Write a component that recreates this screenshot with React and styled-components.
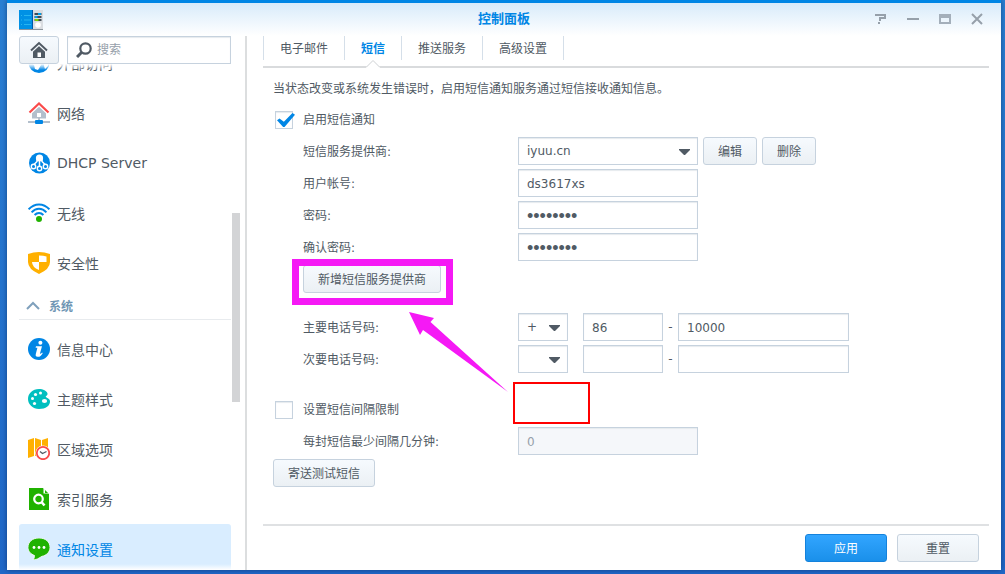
import React from 'react'
import styled, { createGlobalStyle, css } from 'styled-components';

const fontStack = '"DejaVu Sans", "Noto Sans CJK SC", sans-serif';

const services = [
    { name: '外部访问', icon: 'globe' },
    { name: '网络', icon: 'network' },
    { name: 'DHCP Server', icon: 'dhcp' },
    { name: '无线', icon: 'wifi' },
    { name: '安全性', icon: 'shield' },
];

const system = [
    { name: '信息中心', icon: 'info' },
    { name: '主题样式', icon: 'palette' },
    { name: '区域选项', icon: 'region' },
    { name: '索引服务', icon: 'indexing' },
    { name: '通知设置', icon: 'chat', active: true },
];

const tabs = ['电子邮件', '短信', '推送服务', '高级设置'];

const icons = {
    globe: (
        <>
            <circle cx="11" cy="10.500" r="10.500" fill="#0086e5" />
            <path d="M2 5h8l4 4-2 2 1 2-3 5-3-1-1-4-4-3zM16 11l5-2-1 5-3 3-1-3z" fill="#fff" />
        </>
    ),
    network: (
        <>
            <path d="M4 10.500 11 4.500l7 6V16.500H4z" fill="#b3bfcc" />
            <path d="M1.500 10.500 11 1.500l9.500 9" fill="none" stroke="#fff" strokeWidth="4.500" />
            <path d="M1.500 10.500 11 1.500l9.500 9" fill="none" stroke="#fa4b4b" strokeWidth="2.200" />
            <path d="M9 11h4v4H9z" fill="#fff" />
            <path d="M0 19h22v2H0zM10 16h2v3h-2z" fill="#b3bfcc" />
            <rect x="7" y="18" width="8" height="4" rx="1" fill="#0086e5" />
        </>
    ),
    dhcp: (
        <>
            <circle cx="11.500" cy="11" r="10.500" fill="#0086e5" />
            <circle cx="11.500" cy="6" r="3.600" fill="#fff" />
            <path d="M9 7v2.500L5.500 13M14 7v2.500l3.500 3.500M11.500 8v7" fill="none" stroke="#fff" strokeWidth="1.500" />
            <g fill="#0086e5" stroke="#fff" strokeWidth="1.400">
                <circle cx="5.500" cy="14.500" r="2.200" />
                <circle cx="17.500" cy="14.500" r="2.200" />
                <circle cx="11.500" cy="16.500" r="2.200" />
            </g>
        </>
    ),
    wifi: (
        <>
            <g fill="none" stroke="#0086e5" strokeWidth="2">
                <path d="M.6 7.400C6.500.8 15.500.8 21.400 7.400" />
                <path d="M3.600 10.400c4.400-4.800 10.400-4.800 14.800 0" />
                <path d="M6.600 13c2.600-2.800 6.200-2.800 8.800 0" />
            </g>
            <circle cx="11" cy="17" r="3" fill="#20b200" />
        </>
    ),
    shield: (
        <>
            <path d="M0 2Q11-2 22 2V10Q22 17 11 22 0 17 0 10z" fill="#ffb000" />
            <path d="M11 3.500Q15.500 3.500 18.500 4.500V10H11zM4 10h7v8Q4 15 4 10z" fill="#fff" />
        </>
    ),
    info: (
        <>
            <circle cx="11" cy="11" r="11" fill="#0086e5" />
            <circle cx="12.400" cy="4.800" r="2" fill="#fff" />
            <path d="M8 8.200h6l-2.100 7.600q1 .2 2.200-1.200l.6.600Q12.500 19.200 9.500 18.800q-2.400-.2-1.700-2.800L9.400 9.800H7.600z" fill="#fff" />
        </>
    ),
    palette: (
        <>
            <path d="M11 1C4.500 1 0 5.500 0 11s5 10 11 10c7 0 11-3.500 11-7.500 0-3-2.500-3-4-4.500-1-1 2-1.500 1.500-3.500C19 3 15 1 11 1z" fill="#00bfbf" />
            <g fill="#fff">
                <circle cx="4.500" cy="10.500" r="1.500" />
                <circle cx="7.500" cy="6.500" r="1.600" />
                <circle cx="12.500" cy="5" r="1.500" />
                <circle cx="6.500" cy="15.500" r="1.600" />
                <ellipse cx="16.500" cy="13" rx="2.600" ry="2" />
            </g>
        </>
    ),
    region: (
        <>
            <path d="M0 2 6 0V18L0 20zM7 0l6 2V18L7 18zM14 2l6-2V18h-6z" fill="#ffb000" />
            <circle cx="15" cy="15" r="7.600" fill="#fff" />
            <circle cx="15" cy="15" r="6.200" fill="#fff" stroke="#fa4b4b" strokeWidth="1.800" />
            <path d="M12 13.500l2.500 2 4-2" fill="none" stroke="#505a64" strokeWidth="1.300" />
        </>
    ),
    indexing: (
        <>
            <path d="M1 0H15L21 6V22H1z" fill="#20b200" />
            <path d="M15.500 0v5.500H21z" fill="#fff" />
            <path d="M17 2v3h3z" fill="#20b200" />
            <circle cx="10.500" cy="11" r="4.300" fill="none" stroke="#fff" strokeWidth="2.200" />
            <path d="M13.500 14l3 3.500" stroke="#fff" strokeWidth="2.600" />
        </>
    ),
    chat: (
        <>
            <path d="M11 0c6.500 0 11 3.800 11 9.500 0 5-4 8-8 8.800Q9 22 5 22q1.500-1.500 1.500-4.500C2.500 16 0 13 0 9.500 0 3.800 4.500 0 11 0z" fill="#20b200" stroke="#fff" strokeWidth=".8" />
            <g fill="#fff">
                <circle cx="6" cy="9.500" r="1.400" />
                <circle cx="11" cy="9.500" r="1.400" />
                <circle cx="16" cy="9.500" r="1.400" />
            </g>
        </>
    ),
};

function Sidebar() {
    return (
        <SidebarWrapper>
            <SearchBar>
                <HomeButton type="button" aria-label="主页">
                    <svg width="18" height="18" viewBox="0 0 18 18">
                        <path d="M3 10.500 9 5l6 5.500V17H3z" fill="#505a64" />
                        <path d="M1 9.500 9 2l8 7.500" fill="none" stroke="#f3f7fb" strokeWidth="4.200" />
                        <path d="M1 9.500 9 2l8 7.500" fill="none" stroke="#505a64" strokeWidth="2" />
                        <path d="M7.500 11.500h3.500V16H7.500z" fill="#fff" />
                    </svg>
                </HomeButton>
                <SearchBox>
                    <svg width="16" height="16" viewBox="0 0 16 16" fill="none" stroke="#505a64">
                        <circle cx="9.500" cy="6.500" r="5.200" strokeWidth="2.200" />
                        <path d="M5.500 10.500 1 15" strokeWidth="3" />
                    </svg>
                    <input type="search" placeholder="搜索" aria-label="搜索" />
                </SearchBox>
            </SearchBar>
            <NavArea>
                <NavList>
                    {services.map((item) => <NavEntry key={item.name} {...item} />)}
                    <Section>
                        <svg width="14" height="10" viewBox="0 0 14 10">
                            <path d="M1 8l6-6 6 6" fill="none" stroke="#7fa0bc" strokeWidth="2" />
                        </svg>
                        系统
                    </Section>
                    {system.map((item) => <NavEntry key={item.name} {...item} />)}
                </NavList>
                <ScrollThumb />
            </NavArea>
        </SidebarWrapper>
    )
}

function NavEntry({ name, icon, active }) {
    return (
        <NavItem href="#" $active={active}>
            <svg width="22" height="22" viewBox="0 0 22 22">{icons[icon]}</svg>
            <span>{name}</span>
        </NavItem>
    )
}

function Select({ id, label, options, $width }) {
    return (
        <SelectWrapper $width={$width}>
            <select id={id} aria-label={label}>
                {options.map((o) => <option key={o}>{o}</option>)}
            </select>
            <svg width="12" height="6" viewBox="0 0 12 6">
                <path d="M0 0h11v1L6 6H5L0 1z" fill="#505a64" />
            </svg>
        </SelectWrapper>
    )
}

function SmsForm() {
    return (
        <Form>
            <Intro>当状态改变或系统发生错误时，启用短信通知服务通过短信接收通知信息。</Intro>
            <CheckRow>
                <input type="checkbox" defaultChecked />
                <span>启用短信通知</span>
            </CheckRow>
            <Row>
                <label htmlFor="provider">短信服务提供商:</label>
                <Select id="provider" options={['iyuu.cn']} $width={180} />
                <Inline>
                    <Button type="button">编辑</Button>
                    <Button type="button">删除</Button>
                </Inline>
            </Row>
            <Row>
                <label htmlFor="account">用户帐号:</label>
                <TextInput id="account" defaultValue="ds3617xs" $width={180} />
            </Row>
            <Row>
                <label htmlFor="password">密码:</label>
                <PasswordInput id="password" type="password" defaultValue="password" $width={180} />
            </Row>
            <Row>
                <label htmlFor="confirm">确认密码:</label>
                <PasswordInput id="confirm" type="password" defaultValue="password" $width={180} />
            </Row>
            <Row>
                <Button type="button">新增短信服务提供商</Button>
            </Row>
            <Row $top={16}>
                <label htmlFor="primary">主要电话号码:</label>
                <Select label="主要前缀" options={['+']} $width={50} />
                <CountryCode aria-label="主要国家代码" defaultValue="86" $width={80} />
                <Dash>-</Dash>
                <TextInput id="primary" defaultValue="10000" $width={171} />
            </Row>
            <Row>
                <label htmlFor="secondary">次要电话号码:</label>
                <Select label="次要前缀" options={['']} $width={50} />
                <CountryCode aria-label="次要国家代码" $width={80} />
                <Dash>-</Dash>
                <TextInput id="secondary" $width={171} />
            </Row>
            <CheckRow $top={18}>
                <input type="checkbox" />
                <span>设置短信间隔限制</span>
            </CheckRow>
            <Row>
                <label htmlFor="interval">每封短信最少间隔几分钟:</label>
                <TextInput id="interval" defaultValue="0" disabled $width={180} />
            </Row>
            <div>
                <Button type="button">寄送测试短信</Button>
            </div>
            <Markup width="340" height="360" viewBox="0 0 340 360" aria-hidden="true">
                <rect x="32.500" y="194.500" width="154" height="39" fill="none" stroke="#f519f5" strokeWidth="7" />
                <path d="M146 244l25 6-3.500 4L245 324 160 262l-3 5z" fill="#f519f5" />
                <rect x="251" y="315" width="75" height="40" fill="none" stroke="#ff0000" strokeWidth="2" />
            </Markup>
        </Form>
    )
}

function App() {
    return (
        <Desktop>
            <GlobalStyle />
            <Window>
                <TitleBar>
                    <AppIcon width="24" height="20" viewBox="0 0 24 20">
                        <path d="M0 0h14v19H0z" fill="#0091e5" />
                        <path d="M13 0h1v19h-1z" fill="#0058a8" />
                        <path d="M14 0h10v19H14z" fill="#d9dde1" />
                        <path d="M0 19h24v1H0z" fill="#8b949c" />
                        <path d="M2 5.500h1M5 5.500h7M2 10h1M5 10h7M2 14.500h1M5 14.500h7" stroke="#27b4f0" />
                        <path d="M15.500 4h7M15.500 7h7M15.500 10h7" stroke="#414b55" strokeWidth="2" />
                        <path d="M19 4h3M16 7h2.500" stroke="#00a0e9" strokeWidth="2" />
                        <path d="M16 10h3.500" stroke="#7fd000" strokeWidth="2" />
                        <circle cx="19" cy="15" r="2.800" fill="#fff" />
                    </AppIcon>
                    <h1>控制面板</h1>
                    <WindowControls>
                        <button type="button" aria-label="帮助">
                            <svg width="12" height="12" viewBox="0 0 12 12">
                                <path d="M0 2h10v3H5v3M3 10h2" fill="none" stroke="#96a0aa" strokeWidth="2" />
                            </svg>
                        </button>
                        <button type="button" aria-label="最小化">
                            <svg width="12" height="12" viewBox="0 0 12 12">
                                <path d="M0 6h12" stroke="#96a0aa" strokeWidth="2" />
                            </svg>
                        </button>
                        <button type="button" aria-label="最大化">
                            <svg width="12" height="12" viewBox="0 0 12 12">
                                <path d="M0 1h12v10H0zM2 5v4h8V5z" fill="#a4afba" fillRule="evenodd" />
                            </svg>
                        </button>
                        <button type="button" aria-label="关闭">
                            <svg width="12" height="12" viewBox="0 0 12 12">
                                <path d="M1 1l10 10M11 1L1 11" stroke="#96a0aa" strokeWidth="2" />
                            </svg>
                        </button>
                    </WindowControls>
                </TitleBar>
                <Body>
                    <Sidebar />
                    <Content>
                        <Tabs>
                            {tabs.map((tab) => (
                                <Tab key={tab} type="button" $active={tab === '短信'}>
                                    {tab}
                                    {tab === '短信' && (
                                        <svg width="14" height="8" viewBox="0 0 14 8">
                                            <path d="M0 8V7l7-7 7 7v1z" fill="#fff" />
                                            <path d="M0 7.500 7 .5l7 7" fill="none" stroke="#cdd0d3" />
                                        </svg>
                                    )}
                                </Tab>
                            ))}
                        </Tabs>
                        <SmsForm />
                        <Footer>
                            <FooterButton type="button" $primary>应用</FooterButton>
                            <FooterButton type="button">重置</FooterButton>
                        </Footer>
                    </Content>
                </Body>
            </Window>
        </Desktop>
    )
}

const GlobalStyle = createGlobalStyle`
    * {
        box-sizing: border-box;
    }

    body {
        margin: 0;
        color: #505a64;
        font-family: ${fontStack};
        font-size: 12px;
    }

    button, input, select {
        margin: 0;
        color: inherit;
        font-family: inherit;
        font-size: inherit;
    }

    svg {
        display: block;
        flex: none;
    }
`

const Desktop = styled.div`
    display: flex;
    height: 100vh;
    padding: 0 4px 4px 7px;
    background: linear-gradient(#2a80d4, #2068c8);
`

const Window = styled.main`
    display: flex;
    flex: 1;
    flex-direction: column;
    min-width: 0;
    border-top: 3px solid #0086e5;
    background: #fff;
    box-shadow: 0 0 5px rgba(0, 20, 60, 0.5);
`

const TitleBar = styled.header`
    display: grid;
    grid-template-columns: 1fr auto 1fr;
    align-items: center;
    height: 33px;
    padding: 0 8px;
    background: linear-gradient(#d8ebfa, #fff);

    h1 {
        margin: 0;
        padding-bottom: 2px;
        color: #0086e5;
        font-size: 13px;
        font-weight: bold;
        line-height: 20px;
    }
`

const AppIcon = styled.svg`
    margin-left: 4px;
`

const WindowControls = styled.div`
    display: flex;
    justify-content: flex-end;
    padding-bottom: 2px;

    button {
        display: flex;
        justify-content: center;
        width: 32px;
        padding: 4px;
        border: 0;
        background: none;
    }
`

const Body = styled.div`
    display: flex;
    flex: 1;
    min-height: 0;
`

const SidebarWrapper = styled.aside`
    display: flex;
    flex: none;
    flex-direction: column;
    width: 240px;
    padding-left: 12px;
    border-right: 2px solid #dcdedf;
`

const SearchBar = styled.div`
    display: flex;
    gap: 8px;
    padding-right: 14px;
`

const buttonLook = css`
    height: 28px;
    padding: 0 14px 2px;
    border: 1px solid #c6d2de;
    border-radius: 3px;
    background: linear-gradient(#f6fafe, #ebf0f4);
    color: #505a64;
`

const HomeButton = styled.button`
    ${buttonLook}
    display: flex;
    align-items: center;
    justify-content: center;
    width: 40px;
    padding: 0;
`

const SearchBox = styled.div`
    display: flex;
    flex: 1;
    align-items: center;
    gap: 5px;
    min-width: 0;
    padding: 0 8px;
    border: 1px solid #c6d2de;
    box-shadow: inset 0 1px 1px #e6eaee;

    input {
        width: 100%;
        min-width: 0;
        padding: 0;
        border: 0;
        background: none;
        outline: none;
    }

    input::placeholder {
        color: #96a0aa;
    }
`

const NavArea = styled.div`
    position: relative;
    flex: 1;
    min-height: 0;
    overflow: hidden;

    &::before,
    &::after {
        content: '';
        position: absolute;
        right: 0;
        left: 0;
        height: 6px;
    }

    &::before {
        top: 0;
        background: linear-gradient(#fff, rgba(255, 255, 255, 0));
    }

    &::after {
        bottom: 0;
        background: linear-gradient(rgba(255, 255, 255, 0), #fff);
    }
`

/* scrolled so the first entry is half under the search bar */
const NavList = styled.nav`
    margin: -26px 14px 0 0;
`

const NavItem = styled.a`
    display: flex;
    align-items: center;
    gap: 7px;
    height: 50px;
    padding-left: 9px;
    border-radius: 3px;
    background: ${(props) => (props.$active ? '#d9edff' : 'transparent')};
    color: ${(props) => (props.$active ? '#0086e5' : '#505a64')};
    font-size: 14px;
    text-decoration: none;

    span {
        padding-bottom: 1px;
    }
`

const Section = styled.div`
    display: flex;
    align-items: center;
    gap: 9px;
    height: 32px;
    margin-bottom: 4px;
    padding: 4px 0 0 7px;
    border-bottom: 1px solid #e8ebee;
    color: #6f96b4;
    font-weight: bold;
`

const ScrollThumb = styled.div`
    position: absolute;
    top: 149px;
    right: 5px;
    width: 8px;
    height: 189px;
    background: #d3d4d6;
`

const Content = styled.section`
    display: flex;
    flex: 1;
    flex-direction: column;
    min-width: 0;
    padding: 0 12px 0 16px;
`

const Tabs = styled.div`
    display: flex;
    height: 32px;
    padding-bottom: 6px;
    border-bottom: 2px solid #d9dbdd;
`

const Tab = styled.button`
    position: relative;
    padding: 0 16px 2px;
    border: 0;
    border-left: 1px solid #d5dfe9;
    background: none;
    color: ${(props) => (props.$active ? '#0086e5' : '#505a64')};
    font-weight: ${(props) => (props.$active ? 'bold' : 'normal')};

    &:last-child {
        border-right: 1px solid #d5dfe9;
    }

    svg {
        position: absolute;
        bottom: -8px;
        left: calc(50% - 7px);
    }
`

const Form = styled.form`
    position: relative;
    display: flex;
    flex: 1;
    flex-direction: column;
    gap: 4px;
    padding: 5px 10px 0;
`

const Intro = styled.p`
    margin: 0 0 -4px;
    line-height: 32px;
`

const Row = styled.div`
    display: flex;
    align-items: center;
    height: 28px;
    margin-top: ${(props) => props.$top || 0}px;
    padding-left: 30px;

    label {
        flex: none;
        width: 215px;
        padding-bottom: 2px;
    }
`

const Inline = styled.div`
    display: flex;
    gap: 5px;
    margin-left: 5px;
`

const CheckRow = styled.label`
    display: flex;
    align-items: center;
    gap: 10px;
    height: 28px;
    margin-top: ${(props) => props.$top || 0}px;
    padding-left: 2px;

    span {
        padding-bottom: 2px;
    }

    input {
        appearance: none;
        width: 18px;
        height: 18px;
        margin-top: 2px;
        border: 1px solid #c6d2de;
        background: #fff;
        box-shadow: inset 0 1px 1px #e6eaee;
    }

    input:checked::before {
        content: '';
        display: block;
        width: 18px;
        height: 14px;
        margin: 1px 0 0 1px;
        background: #0086e5;
        clip-path: polygon(0 52%, 14% 40%, 38% 62%, 86% 0, 100% 12%, 42% 100%, 34% 100%);
    }
`

const TextInput = styled.input`
    width: ${(props) => props.$width}px;
    height: 28px;
    padding: 2px 8px 0;
    border: 1px solid #c6d2de;
    border-radius: 0;
    background: #fff;
    box-shadow: inset 0 1px 1px #e6eaee;

    &:disabled {
        background: #f5f7fa;
        color: #96a0aa;
    }
`

const PasswordInput = styled(TextInput)`
    font-family: "Liberation Sans", sans-serif;
    font-size: 18px;
`

const CountryCode = styled(TextInput)`
    margin-left: 15px;
`

const Dash = styled.span`
    width: 15px;
    text-align: center;
`

const SelectWrapper = styled.div`
    position: relative;
    width: ${(props) => props.$width}px;

    select {
        display: block;
        appearance: none;
        width: 100%;
        height: 28px;
        padding: 0 8px;
        border: 1px solid #c6d2de;
        border-radius: 0;
        background: #fff;
        box-shadow: inset 0 1px 1px #e6eaee;
    }

    svg {
        position: absolute;
        top: 12px;
        right: 7px;
        pointer-events: none;
    }
`

const Button = styled.button`
    ${buttonLook}
`

const Markup = styled.svg`
    position: absolute;
    top: 0;
    left: 0;
    pointer-events: none;
`

const Footer = styled.footer`
    display: flex;
    justify-content: flex-end;
    gap: 10px;
    padding: 8px 10px;
    border-top: 2px solid #dfe1e3;
`

const FooterButton = styled.button`
    ${buttonLook}
    width: 82px;
    ${(props) => props.$primary && css`
        border-color: #1482dc;
        background: linear-gradient(#32a5ff, #1a90ea);
        color: #fff;
    `}
`

export default App
